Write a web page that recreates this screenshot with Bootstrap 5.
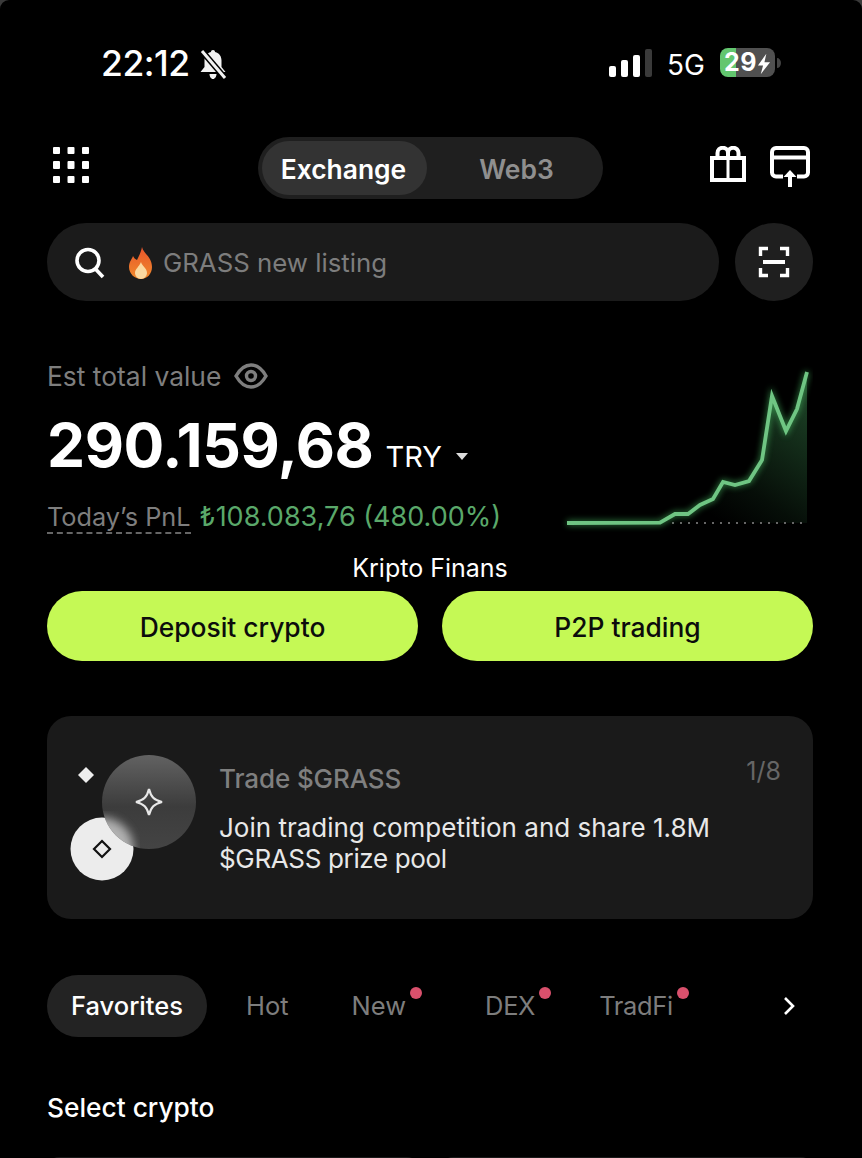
<!DOCTYPE html>
<html lang="en"><head><meta charset="utf-8"><title>Exchange</title>
<link href="https://cdn.jsdelivr.net/npm/bootstrap@5.3.0/dist/css/bootstrap.min.css" rel="stylesheet">
<style>
html,body{height:1158px;overflow:hidden;background:#3a3a3a;}
body{font-family:Inter,"Liberation Sans",sans-serif;color:#fff;}
.screen{width:862px;height:1158px;overflow:hidden;background:#000;padding:0 49px 0 47px;border-radius:9px 9px 0 0;}
.stat{height:137px;padding:45px 32px 0 54px;align-items:flex-start;}
.clock{font-size:35.500px;font-weight:500;line-height:38px;letter-spacing:-.5px;}
.bell{margin:5px 0 0 9px;}
.net{font-size:28px;line-height:40px;margin:0 15px;}
.batt{width:55px;height:29px;border-radius:8px;margin-top:3px;background:linear-gradient(90deg,#63c66f 0 29%,#505050 29%);font-size:25px;font-weight:700;line-height:29px;text-align:center;letter-spacing:.5px;white-space:nowrap;}
.tip{margin:13px 0 0 2px;}
.topnav{height:62px;}
.grid9{margin:-7px 0 0 6px;}
.seg{width:345px;height:62px;margin-left:169px;background:#1f1f1f;border-radius:31px;padding:4px;}
.seg span{display:flex;align-items:center;justify-content:center;font-size:26.400px;font-weight:600;height:54px;padding-top:3px;}
.seg .on{width:165px;background:#333;border-radius:27px;padding-right:2px;}
.seg .off{flex:1;color:#8f8f8f;padding-left:7px;}
.tools{gap:24px;margin:-3px 3px 0 auto;}
.srow{margin-top:24px;gap:16px;}
.sbox{flex:1;height:78px;background:#1b1b1b;border-radius:39px;padding:2px 27px 0;gap:21px;font-size:25.800px;color:#7d7d7d;}
.scan{width:78px;height:78px;border-radius:50%;background:#1f1f1f;}
.est{margin-top:60px;height:193px;}
.lbl{font-size:26.400px;color:#7e7e7e;line-height:30px;gap:13px;}
.val{font-size:60.500px;font-weight:700;line-height:72px;letter-spacing:-.4px;margin-top:18px;white-space:nowrap;}
.cur{font-size:29px;font-weight:400;letter-spacing:0;margin-left:12px;line-height:1;}
.caret{display:inline-block;width:0;height:0;border:6px solid transparent;border-top:7px solid #ddd;border-bottom:0;margin-left:14px;vertical-align:7px;line-height:1;}
.pnl{font-size:25.300px;line-height:30px;margin-top:21px;white-space:nowrap;}
.pnl u{color:#7e7e7e;text-decoration:none;border-bottom:2px dashed #666;margin-right:9px;}
.pnl b{font-weight:400;color:#5aa86a;font-size:27px;}
.chart{margin-top:1px;}
.kf{font-size:25px;line-height:30px;text-align:center;margin-top:-1px;}
.acts{gap:24px;margin-top:8px;}
.acts .btn{flex:1;height:70px;border-radius:35px;background:#c5f955;border:0;color:#0c0c0c;font-size:26.400px;font-weight:500;padding-top:9px;}
.promo{margin-top:55px;height:203px;background:#1a1a1a;border:0;border-radius:24px;flex-direction:row;padding:0 32px 0 23px;}
.ptxt{margin-left:19px;padding-top:45px;flex:1;}
.pt{font-size:26px;font-weight:500;color:#7f7f7f;line-height:36px;letter-spacing:-.1px;}
.pd{font-size:26px;line-height:31px;color:#e8e8e8;margin-top:15px;}
.tight{letter-spacing:-.35px;}
.pn{font-size:25px;color:#666;margin-top:37px;}
.tabs{margin-top:56px;height:62px;}
.tab{position:relative;font-size:25.500px;color:#7d7d7d;line-height:62px;}
.tab.act{width:160px;background:#232323;border-radius:31px;color:#fff;font-weight:500;text-align:center;}
.narrow{letter-spacing:-.35px;}
.dot{position:absolute;width:12px;height:12px;border-radius:50%;background:#d9506c;top:12px;right:-16px;}
.chev{margin:0 18px 0 auto;}
.sel{font-size:26.300px;font-weight:500;line-height:32px;margin-top:55px;}
.lst{gap:22px;margin-top:33px;}
.lst div{flex:1;height:40px;background:#1a1a1a;border-radius:12px 12px 0 0;}
</style></head><body>
<main class="screen">
<div class="stat d-flex justify-content-between">
 <div class="d-flex"><span class="clock">22:12</span>
  <svg class="bell" width="28" height="29" viewBox="0 0 28 29"><path d="M14 0c1.300 0 2 .9 2 2 4.500 1 6.500 4.500 6.500 8.500V17l4 5H1.500l4-5v-6.500C5.500 6.500 7.500 3 12 2c0-1.100.7-2 2-2zM10.500 24h7c0 2.500-1.500 5-3.500 5s-3.500-2.500-3.500-5z" fill="#f2f2f2"/><path d="M3 1l23 27" stroke="#000" stroke-width="6"/><path d="M3 1l23 27" stroke="#f2f2f2" stroke-width="3"/></svg></div>
 <div class="d-flex">
  <svg class="mt-1" width="43" height="28" viewBox="0 0 43 28"><g fill="#fff"><rect x="0" y="17" width="7" height="11" rx="2"/><rect x="12" y="11" width="7" height="17" rx="2"/><rect x="24" y="6" width="7" height="22" rx="2"/></g><rect x="36" y="0" width="7" height="28" rx="2" fill="#3a3a3a"/></svg>
  <span class="net">5G</span><span class="batt">29<svg width="14" height="22" viewBox="0 0 15 22"><path d="M10 0 1 12.500h5.500L4 22l10-13H8z" fill="#fff"/></svg></span>
  <svg class="tip" width="4" height="10" viewBox="0 0 4 10"><path d="M0 0c2 0 4 2 4 5s-2 5-4 5z" fill="#444"/></svg>
 </div>
</div>
<div class="topnav d-flex align-items-center">
 <svg class="grid9 flex-shrink-0" width="36" height="36" viewBox="0 0 36 36" fill="#fff"><rect x="0" y="0" width="7" height="7" rx="1"/><rect x="14.500" y="0" width="7" height="7" rx="1"/><rect x="29" y="0" width="7" height="7" rx="1"/><rect x="0" y="14" width="7" height="8" rx="1"/><rect x="14.500" y="14" width="7" height="8" rx="1"/><rect x="29" y="14" width="7" height="8" rx="1"/><rect x="0" y="29" width="7" height="7" rx="1"/><rect x="14.500" y="29" width="7" height="7" rx="1"/><rect x="29" y="29" width="7" height="7" rx="1"/></svg>
 <div class="seg d-flex"><span class="on">Exchange</span><span class="off">Web3</span></div>
 <div class="tools d-flex align-items-start">
  <svg width="36" height="36" viewBox="0 0 36 36" fill="none" stroke="#fff" stroke-width="4"><rect x="2" y="12" width="32" height="22"/><path d="M18 12v22" stroke-width="3"/><path d="M7.500 12V7a5 5 0 0 1 10.500 0v5M18 12V7a5 5 0 0 1 10.500 0v5"/></svg>
  <svg width="40" height="41" viewBox="0 0 40 41" fill="none" stroke="#fff" stroke-width="4"><path d="M13 30.500H6a4 4 0 0 1-4-4V6a4 4 0 0 1 4-4h28a4 4 0 0 1 4 4v20.500a4 4 0 0 1-4 4h-7"/><path d="M2 11.500h36"/><path d="M20 41V28"/><path d="M13.500 31 20 24l6.500 7z" fill="#fff" stroke="none"/></svg>
 </div>
</div>
<div class="srow d-flex">
 <div class="sbox d-flex align-items-center">
  <svg width="32" height="32" viewBox="0 0 32 32" fill="none" stroke="#fff" stroke-width="3.600"><circle cx="14" cy="13.500" r="11"/><path d="m21.500 22 7.500 8"/></svg>
  <span class="d-flex align-items-center gap-2"><svg width="28" height="32" viewBox="0 0 28 32"><defs><linearGradient id="fl" x1="0" y1="0" x2="0" y2="1"><stop offset="0" stop-color="#e8552b"/><stop offset="1" stop-color="#f08a2c"/></linearGradient></defs><path d="M15 0c1 6 10 10 10 20 0 7-5 12-11 12S2 27 2 20c0-5 3-8 4-11 1 2 2 3 4 4 2-4 4-8 5-13z" fill="url(#fl)"/><path d="M14 15c1 4 6 6 6 11 0 3-3 6-6 6s-6-3-6-6c0-4 4-6 6-11z" fill="#fbd9a0"/></svg>GRASS new listing</span>
 </div>
 <div class="scan d-flex align-items-center justify-content-center">
  <svg width="32" height="32" viewBox="0 0 32 32" fill="none" stroke="#fff" stroke-width="3.400"><path d="M10 2.500H2.500V10M22 2.500h7.500V10M10 29.500H2.500V22M22 29.500h7.500V22"/><path d="M5 16h22" stroke-width="4"/></svg>
 </div>
</div>
<section class="est d-flex justify-content-between">
 <div>
  <div class="lbl d-flex align-items-center">Est total value
   <svg width="34" height="28" viewBox="0 0 34 28" fill="none" stroke="#7e7e7e" stroke-width="3.400"><path d="M2 14C6 7 11 3 17 3s11 4 15 11c-4 7-9 11-15 11S6 21 2 14z"/><circle cx="17" cy="14" r="4.500"/></svg></div>
  <div class="val">290.159,68<span class="cur">TRY</span><i class="caret"></i></div>
  <div class="pnl"><u>Today’s PnL</u><b>₺108.083,76 (480.00%)</b></div>
 </div>
 <svg class="chart flex-shrink-0" width="253" height="170" viewBox="560 362 253 170" fill="none">
  <defs><linearGradient id="ar" x1="1" y1="0" x2=".35" y2=".95"><stop offset="0" stop-color="#4caf65" stop-opacity=".42"/><stop offset=".75" stop-color="#4caf65" stop-opacity=".08"/><stop offset="1" stop-color="#4caf65" stop-opacity="0"/></linearGradient><filter id="gl" x="-10%" y="-10%" width="120%" height="120%"><feGaussianBlur stdDeviation="3"/></filter></defs>
  <path d="M660 523 675 514 688 514 700 505 713 499 723 482 735 485 749 481 762 460 772 396 786 431 797 409 807 372V523Z" fill="url(#ar)"/>
  <path d="M672 523H807" stroke="#666" stroke-width="2" stroke-dasharray="2 6"/>
  <path d="M567 523 660 522.700 675 514 688 514 700 505 713 499 723 482 735 485 749 481 762 460 772 396 786 431 797 409 807 372" stroke="#4ecb6a" stroke-width="5" opacity=".6" filter="url(#gl)"/>
  <path d="M567 523 660 522.700 675 514 688 514 700 505 713 499 723 482 735 485 749 481 762 460 772 396 786 431 797 409 807 372" stroke="#6fc583" stroke-width="3.800"/>
 </svg>
</section>
<div class="kf">Kripto Finans</div>
<div class="acts d-flex"><button class="btn">Deposit crypto</button><button class="btn">P2P trading</button></div>
<section class="promo card d-flex">
 <svg class="flex-shrink-0" width="130" height="203" viewBox="70 716 130 203">
  <defs><linearGradient id="bl" x1="0" y1="0" x2="0" y2="1"><stop offset="0" stop-color="#626262"/><stop offset=".55" stop-color="#3c3c3c"/><stop offset="1" stop-color="#444"/></linearGradient><clipPath id="cc"><circle cx="149" cy="802" r="47"/></clipPath><filter id="bb"><feGaussianBlur stdDeviation="5"/></filter></defs>
  <path d="m86 767 8 8-8 8-8-8z" fill="#eee"/>
  <circle cx="102" cy="849" r="31.500" fill="#ececec"/>
  <path d="m102 841 8 8-8 8-8-8z" fill="none" stroke="#111" stroke-width="2.200"/>
  <circle cx="149" cy="802" r="47" fill="url(#bl)"/>
  <g clip-path="url(#cc)"><circle cx="102" cy="849" r="31.500" fill="#d8d8d8" opacity=".75" filter="url(#bb)"/></g>
  <path d="M149 789c2 8 5 11 13 13-8 2-11 5-13 13-2-8-5-11-13-13 8-2 11-5 13-13z" fill="none" stroke="#e8e8e8" stroke-width="2.200"/>
 </svg>
 <div class="ptxt"><div class="pt">Trade $GRASS</div><div class="pd">Join trading competition and share 1.8M<br><span class="tight">$GRASS prize pool</span></div></div>
 <div class="pn">1/8</div>
</section>
<nav class="tabs d-flex align-items-center">
 <span class="tab act">Favorites</span>
 <span class="tab" style="margin-left:39px">Hot</span>
 <span class="tab" style="margin-left:63px">New<i class="dot"></i></span>
 <span class="tab narrow" style="margin-left:79px">DEX<i class="dot"></i></span>
 <span class="tab narrow" style="margin-left:64px">TradFi<i class="dot"></i></span>
 <svg class="chev" width="12" height="20" viewBox="0 0 12 20" fill="none" stroke="#fff" stroke-width="2.600"><path d="m2 2 8 8-8 8"/></svg>
</nav>
<div class="sel">Select crypto</div>
<div class="lst d-flex"><div></div><div></div></div>
</main>
<script src="https://cdn.jsdelivr.net/npm/bootstrap@5.3.0/dist/js/bootstrap.bundle.min.js"></script>
</body></html>
